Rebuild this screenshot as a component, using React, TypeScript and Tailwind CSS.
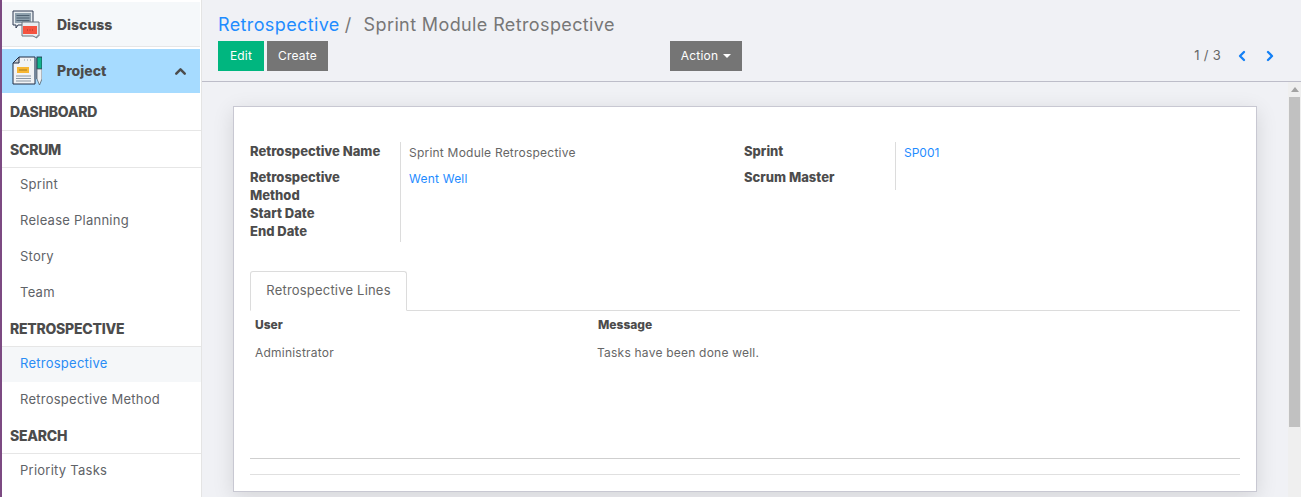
import { ChevronLeft, ChevronRight, ChevronUp } from 'lucide-react';

function DiscussIcon() {
  return (
    <svg width="30" height="30" viewBox="0 0 30 30" className="shrink-0">
      <path d="M1 2h20v14H7l-1 0-2 3v-3H1z" fill="#e8edf0" stroke="#2f3b52" strokeWidth="1" />
      <rect x="3" y="4" width="16" height="10" fill="#8fa1ae" />
      <path d="M4.5 6.5h13M4.5 9h13M4.5 11.500h13" stroke="#4f6272" strokeWidth="1" />
      <path d="M10 13h17v14h-2v2l-4-2H10z" fill="#e8edf0" stroke="#67727c" strokeWidth="1" />
      <rect x="11" y="17" width="14" height="8" fill="#f4533f" />
      <path d="M15 21h1M17.500 21h1M20 21h1" stroke="#a5352a" strokeWidth="1" />
    </svg>
  );
}

function ProjectIcon() {
  return (
    <svg width="30" height="30" viewBox="0 0 30 30" className="shrink-0">
      <path d="M7 1h16v27H1V7z" fill="#f1f3f5" stroke="#1f2d45" strokeWidth="1" />
      <path d="M7 1v6H1z" fill="#c5ccd3" stroke="#1f2d45" strokeWidth="1" />
      <rect x="5" y="11" width="12" height="6" fill="#f7b733" />
      <path d="M7 14h8" stroke="#a77a1c" strokeWidth="1" />
      <path d="M4 20h15M4 22.500h15M4 25h15" stroke="#8a97a3" strokeWidth="1" />
      <path d="M12 4h1M15 4h1M18 4h1" stroke="#8a97a3" strokeWidth="1" />
      <rect x="22" y="2" width="3" height="21" fill="#76879a" />
      <rect x="25" y="1" width="5" height="12" fill="#12b38c" stroke="#1f2d45" strokeWidth="0.800" />
      <path d="M25 13h5v10l-2.500 6-2.500-6z" fill="#eef1f3" stroke="#55636f" strokeWidth="0.800" />
    </svg>
  );
}

function SectionTitle({ children, box }: { children: string; box: string }) {
  return (
    <div className={`${box} flex items-center px-2 border-b border-[#e6e6e6] text-[14px] font-extrabold text-[#4c4c4c] tracking-[-0.25px]`}>
      {children}
    </div>
  );
}

// the row right under a section title is a bit shorter, the title's border sits lower
function NavItem({ children, active, first }: { children: string; active?: boolean; first?: boolean }) {
  return (
    <div className={`${first ? 'h-[35px] pb-[1px]' : 'h-[36px]'} flex items-center pl-[18px] text-[13px] tracking-[0.25px] ${active ? 'bg-[#f5f7f9] text-[#2a8cf5]' : 'text-[#5f6368]'}`}>
      {children}
    </div>
  );
}

function Sidebar() {
  return (
    <aside className="w-[202px] shrink-0 h-full border-l-2 border-l-[#7c4a82] border-r border-r-[#e4e4e4] bg-white overflow-hidden">
      <div className="h-[45px] mt-[2px] mb-[2px] bg-[#f5f8fa] border-b border-[#e6e6e6] flex items-center pl-[10px] gap-[15px] mr-[1px]">
        <DiscussIcon />
        <span className="text-[14px] font-extrabold text-[#4c4c4c]">Discuss</span>
      </div>
      <div className="h-[44px] mb-[1px] bg-[#a6dbff] flex items-center pl-[10px] gap-[15px] mr-[1px]">
        <ProjectIcon />
        <span className="text-[14px] font-extrabold text-[#4c4c4c] pb-[1px]">Project</span>
        <ChevronUp size={17} strokeWidth={3.5} className="ml-auto mr-[11px] text-[#4c4c4c]" />
      </div>
      <SectionTitle box="h-[37px] pb-[1px]">DASHBOARD</SectionTitle>
      <SectionTitle box="h-[37px]">SCRUM</SectionTitle>
      <NavItem first>Sprint</NavItem>
      <NavItem>Release Planning</NavItem>
      <NavItem>Story</NavItem>
      <NavItem>Team</NavItem>
      <SectionTitle box="h-[36px] pb-[1px]">RETROSPECTIVE</SectionTitle>
      <NavItem first active>Retrospective</NavItem>
      <NavItem>Retrospective Method</NavItem>
      <SectionTitle box="h-[36px] pb-[1px]">SEARCH</SectionTitle>
      <NavItem first>Priority Tasks</NavItem>
    </aside>
  );
}

function ControlPanel() {
  return (
    <header className="h-[82px] shrink-0 border-b border-[#bdbdc9] pl-[16px] pr-[20px] pt-[13px]">
      <div className="h-[24px] flex items-center text-[18px] leading-[24px] tracking-[0.38px]">
        <span className="text-[#1f8cff]">Retrospective</span>
        <span className="text-[#777] ml-[5px]">/</span>
        <span className="text-[#777] ml-[12px]">Sprint Module Retrospective</span>
      </div>
      <div className="flex items-center mt-[4px] h-[30px]">
        <button className="w-[46px] h-[30px] bg-[#00b67f] text-white text-[12px] tracking-[0.2px]">Edit</button>
        <button className="w-[61px] h-[30px] ml-[3px] bg-[#757575] text-white text-[12px] tracking-[0.2px]">Create</button>
        <button className="w-[72px] h-[30px] ml-[342px] bg-[#757575] text-white text-[12px] tracking-[0.2px] flex items-center justify-center gap-[5px]">
          Action
          <span className="w-0 h-0 border-x-[4px] border-x-transparent border-t-[4px] border-t-white" />
        </button>
        <div className="ml-auto mr-[3px] flex items-center text-[#666] text-[13px] tracking-[0.3px]">
          <span>1 / 3</span>
          <ChevronLeft size={16} strokeWidth={3.5} className="ml-[13px] text-[#1480f5]" />
          <ChevronRight size={16} strokeWidth={3.5} className="ml-[12px] text-[#1480f5]" />
        </div>
      </div>
    </header>
  );
}

function Label({ children, className = '' }: { children: string; className?: string }) {
  return <div className={`text-[13px] font-extrabold leading-[18px] text-[#4c4c4c] ${className}`}>{children}</div>;
}

function RecordForm() {
  return (
    <div className="ml-[31px] w-[1024px] h-[386px] mt-[24px] shrink-0 bg-white border border-[#c8c8d2] shadow-[0_5px_20px_rgba(0,0,0,0.12)] pl-[16px] pr-[16px] pt-[35px]">
      <div className="flex">
        <div className="w-[494px] flex">
          <div className="w-[151px] border-r border-[#dcdcdc] h-[100px]">
            <Label>Retrospective Name</Label>
            <Label className="mt-[8px] w-[110px]">Retrospective Method</Label>
            <Label>Start Date</Label>
            <Label>End Date</Label>
          </div>
          <div className="pl-[8px] text-[12px] leading-[18px] pt-[2px] tracking-[0.22px]">
            <div className="text-[#666]">Sprint Module Retrospective</div>
            <div className="text-[#1f8cff] mt-[8px]">Went Well</div>
          </div>
        </div>
        <div className="flex flex-1">
          <div className="w-[152px] border-r border-[#dcdcdc] h-[48px]">
            <Label>Sprint</Label>
            <Label className="mt-[8px]">Scrum Master</Label>
          </div>
          <div className="pl-[8px] text-[12px] leading-[18px] pt-[2px] text-[#1f8cff]">SP001</div>
        </div>
      </div>
      <div className="mt-[29px] border-b border-[#dcdcdc] h-[40px]">
        <div className="w-[157px] h-[40px] bg-white border border-[#dcdcdc] border-b-white rounded-t-[3px] text-[13px] tracking-[0.2px] text-[#666] flex items-center justify-center">
          Retrospective Lines
        </div>
      </div>
      <div className="flex text-[12px] font-extrabold text-[#4c4c4c] h-[27px] items-center pl-[5px]">
        <span className="w-[343px]">User</span>
        <span>Message</span>
      </div>
      <div className="flex text-[12px] tracking-[0.22px] text-[#666] h-[30px] items-center pl-[5px]">
        <span className="w-[342px]">Administrator</span>
        <span>Tasks have been done well.</span>
      </div>
      <div className="mt-[90px] border-t border-[#cfcfcf] h-[16px]" />
      <div className="border-t border-[#e0e0e0]" />
    </div>
  );
}

export default function App() {
  return (
    <div className="w-[1301px] h-[497px] flex overflow-hidden bg-[#f0f1f5] font-['Inter','Liberation_Sans',sans-serif]">
      <Sidebar />
      <main className="flex-1 flex flex-col min-w-0">
        <ControlPanel />
        <div className="flex-1 flex min-h-0 overflow-hidden">
          <RecordForm />
          <div className="ml-auto w-[13px] shrink-0 bg-[#efefef] flex flex-col items-center">
            <span className="mt-[5px] w-0 h-0 border-x-[4px] border-x-transparent border-b-[5px] border-b-[#a3a3a3]" />
            <div className="mt-[5px] w-[11px] h-[330px] bg-[#c1c1c1]" />
          </div>
        </div>
      </main>
    </div>
  );
}
